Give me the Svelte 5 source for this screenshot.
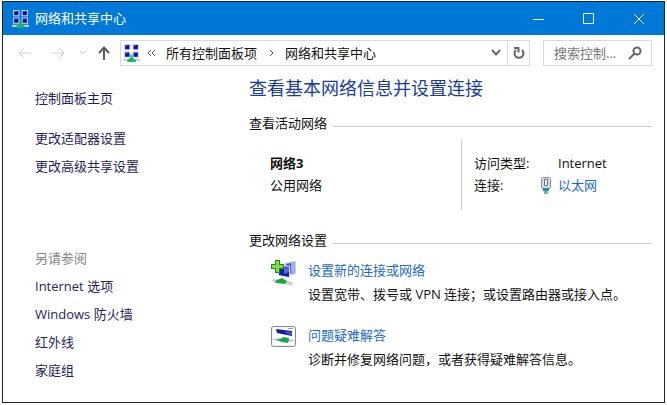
<script lang="ts">
    const tasks = ['更改适配器设置', '更改高级共享设置'];
    const related = ['Internet 选项', 'Windows 防火墙', '红外线', '家庭组'];

    let search = '';
</script>

{#snippet networkIcon()}
    <svg class="net-icon" viewBox="0 0 16 17" aria-hidden="true">
        <path d="M1 0h6v6H1zM9 0h6v6H9zM1 7h6v6H1zM9 7h6v6H9z" fill="#c9d6ee" />
        <path d="M2 1h4v4H2zM10 1h4v4h-4zM2 8h4v4H2zM10 8h4v4h-4z" fill="#11119c" />
        <path d="M2 1h2v1H2zM10 1h2v1h-2zM2 8h2v1H2zM10 8h2v1h-2z" fill="#4a5ad8" />
        <path d="M0 14h16v2H0z" fill="#cfd3d6" />
        <path d="M7 10h2v3l3 2v2H4v-2l3-2z" fill="#18b968" />
    </svg>
{/snippet}

<div class="window">
    <header class="titlebar">
        {@render networkIcon()}
        <span class="caption">网络和共享中心</span>
        <button aria-label="最小化">
            <svg width="12" height="12" viewBox="0 0 12 12"><path d="M0 6.5h11" /></svg>
        </button>
        <button aria-label="最大化">
            <svg width="12" height="12" viewBox="0 0 12 12"><path d="M.5 .5h10v10H.5z" /></svg>
        </button>
        <button aria-label="关闭">
            <svg width="12" height="12" viewBox="0 0 12 12"><path d="M1 1l10 10M11 1L1 11" /></svg>
        </button>
    </header>

    <div class="toolbar">
        <nav class="history">
            <button aria-label="后退" disabled>
                <svg width="14" height="12" viewBox="0 0 14 12"><path d="M13 6H1M6 1L1 6l5 5" /></svg>
            </button>
            <button aria-label="前进" disabled>
                <svg width="14" height="12" viewBox="0 0 14 12"><path d="M1 6h12M8 1l5 5-5 5" /></svg>
            </button>
            <button class="recent" aria-label="最近的位置" disabled>
                <svg width="8" height="6" viewBox="0 0 8 6"><path d="M1 1l3 3 3-3" /></svg>
            </button>
            <button class="up" aria-label="向上">
                <svg width="14" height="14" viewBox="0 0 14 14"><path d="M7 14V2M2 7l5-5.500 5 5.500" /></svg>
            </button>
        </nav>

        <div class="address">
            {@render networkIcon()}
            <svg class="sep first" width="10" height="8" viewBox="0 0 10 8"><path d="M4 1L1 4l3 3M8 1L5 4l3 3" /></svg>
            <a href="#all">所有控制面板项</a>
            <svg class="sep" width="6" height="8" viewBox="0 0 6 8"><path d="M1 1l3 3-3 3" /></svg>
            <a href="#center">网络和共享中心</a>
            <button class="drop" aria-label="以前的位置">
                <svg width="12" height="8" viewBox="0 0 12 8"><path d="M2 1l4 4.500L10 1" /></svg>
            </button>
            <button class="refresh" aria-label="刷新">
                <svg width="14" height="14" viewBox="0 0 14 14">
                    <path d="M4 4a4.500 4.500 0 1 0 6 0M2 2h4.500v4.500" />
                </svg>
            </button>
        </div>

        <label class="search">
            <input type="text" aria-label="搜索控制面板" placeholder="搜索控制..." bind:value={search} />
            <svg width="14" height="14" viewBox="0 0 14 14"><circle cx="9" cy="5" r="3.500" /><path d="M6.500 7.500L1 13" /></svg>
        </label>
    </div>

    <div class="body">
        <aside>
            <a class="home" href="#home">控制面板主页</a>
            {#each tasks as task}
                <a href="#task">{task}</a>
            {/each}
            <p class="see-also">另请参阅</p>
            {#each related as item}
                <a href="#related">{item}</a>
            {/each}
        </aside>

        <main>
            <h1>查看基本网络信息并设置连接</h1>

            <h2>查看活动网络</h2>
            <section class="active">
                <div class="network">
                    <strong>网络3</strong>
                    <span>公用网络</span>
                </div>
                <dl>
                    <dt>访问类型:</dt>
                    <dd>Internet</dd>
                    <dt>连接:</dt>
                    <dd>
                        <svg class="plug" width="10" height="17" viewBox="0 0 10 17" aria-hidden="true">
                            <path d="M.5 1.500l1-1h7l1 1v9l-2 2h-5l-2-2z" fill="#d3dce4" stroke="#8192a0" />
                            <path d="M3.500 2.500h3v6h-3z" fill="#fff" stroke="#66717b" />
                            <path d="M2 11h6v3H2z" fill="#318ba8" />
                            <path d="M3 14h4v3H3z" fill="#67b7cd" />
                        </svg>
                        <a href="#ethernet">以太网</a>
                    </dd>
                </dl>
            </section>

            <h2>更改网络设置</h2>
            <section class="option">
                <svg width="28" height="28" viewBox="0 0 28 28" aria-hidden="true">
                    <path d="M14 4l12-2v13l-9 2z" fill="#c4cdec" />
                    <path d="M16 5l9-2v11l-7 1z" fill="#555fc9" />
                    <path d="M21 4l4-1v11l-4 1z" fill="#9eacf0" />
                    <path d="M8 6l12 1v12L8 17z" fill="#dce2f4" />
                    <path d="M9 7l10 1v10L9 16z" fill="#1c1caa" />
                    <path d="M14 8l5 1v4l-5 2z" fill="#5969d8" />
                    <path d="M1 21l5-1 17 3-1 4-4-1-5-2-9-1z" fill="#ccd2d4" />
                    <path d="M5 22l7-3 5 3-2 3-9-1z" fill="#18a83f" />
                    <path d="M5 1h5v4h4v5h-4v4H5v-4H1V5h4z" fill="#188d16" />
                    <path d="M6 2h3v4h4v3H9v4H6V9H2V6h4z" fill="#80dc4a" />
                </svg>
                <div>
                    <a href="#setup">设置新的连接或网络</a>
                    <p>设置宽带、拨号或 VPN 连接；或设置路由器或接入点。</p>
                </div>
            </section>
            <section class="option">
                <svg width="28" height="28" viewBox="0 0 28 28" aria-hidden="true">
                    <rect x="1.500" y="2.500" width="24" height="20" rx="2" fill="#f0f2f4" stroke="#858a90" />
                    <path d="M3 4h21v17H3z" fill="#fff" />
                    <path d="M18 4h5v1h-5z" fill="#9a9fa8" />
                    <path d="M6 5l16 2v5L7 9z" fill="#151aa0" />
                    <path d="M14 7l8 1v3l-5-1z" fill="#434cc8" />
                    <path d="M3 15l7-1 14 2v1l-6 1-15-2z" fill="#bcc3c7" />
                    <path d="M6 16l5-1 2-2 6 1-1 5-6-1z" fill="#16a947" />
                </svg>
                <div>
                    <a href="#troubleshoot">问题疑难解答</a>
                    <p>诊断并修复网络问题，或者获得疑难解答信息。</p>
                </div>
            </section>
        </main>
    </div>
</div>

<style>
    :global(body) {
        background: #fff;
        font-family: "Open Sans", "Noto Sans CJK SC", sans-serif;
        font-size: 13px;
        line-height: 20px;
        color: #111;
    }

    .window {
        box-sizing: border-box;
        margin: 1px 2px 2px;
        min-height: calc(100vh - 3px);
        border: 1px solid #20252b;
    }

    a {
        text-decoration: none;
        color: #1a69c8;
    }

    p, h1, h2, dl, dd {
        margin: 0;
    }

    button {
        display: flex;
        align-items: center;
        justify-content: center;
        padding: 0;
        border: none;
        background: none;
        color: inherit;
    }

    button svg, .sep, .search svg {
        flex: none;
        fill: none;
        stroke: currentColor;
    }

    .net-icon {
        flex: none;
        width: 17px;
        height: 18px;
    }

    .titlebar {
        display: flex;
        align-items: stretch;
        height: 33px;
        padding-left: 9px;
        background: #0078d7;
        color: #fff;
    }

    .titlebar .net-icon {
        align-self: center;
    }

    .caption {
        flex: 1;
        padding-left: 6px;
        line-height: 32px;
    }

    .titlebar button {
        width: 50px;
    }

    .toolbar {
        display: flex;
        align-items: center;
        height: 36px;
        padding-right: 12px;
    }

    .history {
        display: flex;
        align-items: center;
        width: 117px;
        color: #d0d0d0;
    }

    .history button {
        width: 33px;
        padding-left: 10px;
    }

    .history .recent {
        width: 20px;
        padding-left: 8px;
    }

    .history .up {
        width: 30px;
        padding: 0;
        color: #5c5c5c;
    }

    .up svg, .drop svg, .refresh svg, .search svg {
        stroke-width: 2;
    }

    .address, .search {
        box-sizing: border-box;
        display: flex;
        align-items: center;
        height: 26px;
        border: 1px solid #d9d9d9;
    }

    .address {
        flex: 1;
        padding-left: 2px;
    }

    .address a {
        color: #111;
        white-space: nowrap;
    }

    .sep {
        margin: 0 10px 0 12px;
        color: #555;
    }

    .sep.first {
        margin: 0 9px 0 7px;
    }

    .drop, .refresh {
        align-self: stretch;
        width: 22px;
        color: #666;
    }

    .drop {
        margin-left: auto;
    }

    .refresh {
        border-left: 1px solid #d9d9d9;
    }

    .search {
        width: 109px;
        margin-left: 13px;
        padding: 0 9px 0 10px;
        color: #666;
    }

    .search input {
        flex: 1;
        min-width: 0;
        padding: 0;
        border: none;
        outline: none;
        font: inherit;
        color: inherit;
    }

    .search input::placeholder {
        color: #757575;
        opacity: 1;
    }

    .body {
        display: flex;
    }

    aside {
        display: flex;
        flex-direction: column;
        align-items: flex-start;
        flex: none;
        width: 214px;
        box-sizing: border-box;
        padding: 13px 0 0 32px;
        line-height: 28px;
    }

    aside a {
        color: #1f2457;
    }

    .home {
        margin-bottom: 12px;
    }

    .see-also {
        margin-top: 64px;
        color: #858585;
    }

    main {
        flex: 1;
        min-width: 0;
        padding: 4px 12px 0 32px;
    }

    h1 {
        font-size: 18px;
        font-weight: 400;
        line-height: 26px;
        color: #1a3c9c;
    }

    h2 {
        display: flex;
        align-items: center;
        gap: 6px;
        margin-top: 12px;
        font-size: 13px;
        font-weight: 400;
    }

    h2::after {
        content: "";
        flex: 1;
        height: 1px;
        margin-top: 6px;
        background: #ccc;
    }

    .active {
        display: flex;
        margin: 6px 0 20px;
        line-height: 22px;
    }

    .network {
        display: flex;
        flex-direction: column;
        flex: 1;
        padding: 13px 0 0 21px;
    }

    dl {
        display: grid;
        grid-template-columns: 66px 1fr;
        align-content: start;
        box-sizing: border-box;
        width: 191px;
        min-height: 71px;
        padding: 13px 0 0 12px;
        border-left: 1px solid #ccc;
    }

    dd {
        display: flex;
        align-items: center;
        padding-left: 18px;
    }

    /* the plug hangs in the gutter, so the link lines up with the value above */
    .plug {
        margin: 0 7px 0 -17px;
    }

    .option {
        display: flex;
        gap: 10px;
        padding-left: 21px;
        margin: 8px 0 17px;
        line-height: 24px;
    }

    .option svg {
        flex: none;
        margin-top: 1px;
    }
</style>
